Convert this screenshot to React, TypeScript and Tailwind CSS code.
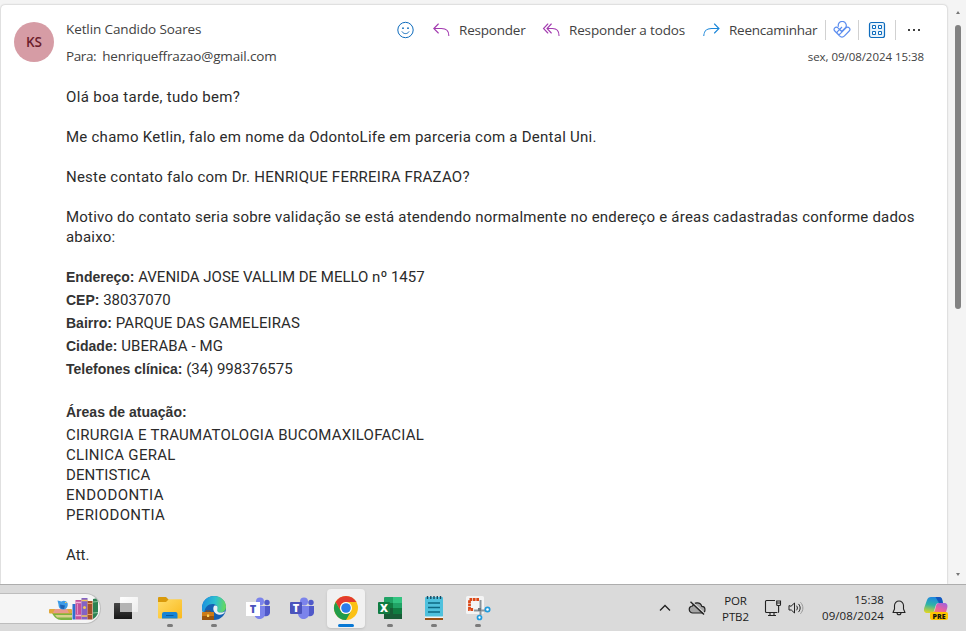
import React from "react";

const TEXT_UI = "font-['Open_Sans','Noto_Sans',sans-serif]";
const TEXT_BODY = "font-[Roboto,'Liberation_Sans',sans-serif]";

interface MailLine {
  label?: string;
  text?: string;
  className: string;
}

const mailLines: MailLine[] = [
  { text: "Olá boa tarde, tudo bem?", className: "h-10 tracking-[0.33px]" },
  {
    text: "Me chamo Ketlin, falo em nome da OdontoLife em parceria com a Dental Uni.",
    className: "h-10 tracking-[0.25px]",
  },
  {
    text: "Neste contato falo com Dr. HENRIQUE FERREIRA FRAZAO?",
    className: "h-10 tracking-[0.23px]",
  },
  {
    text: "Motivo do contato seria sobre validação se está atendendo normalmente no endereço e áreas cadastradas conforme dados",
    className: "h-5 tracking-[0.21px]",
  },
  { text: "abaixo:", className: "h-10 tracking-[0.2px]" },
  {
    label: "Endereço:",
    text: "AVENIDA JOSE VALLIM DE MELLO nº 1457",
    className: "h-[23px] tracking-[-0.01px]",
  },
  { label: "CEP:", text: "38037070", className: "h-[23px]" },
  {
    label: "Bairro:",
    text: "PARQUE DAS GAMELEIRAS",
    className: "h-[23px] tracking-[0.1px]",
  },
  {
    label: "Cidade:",
    text: "UBERABA - MG",
    className: "h-[23px] tracking-[0.1px]",
  },
  {
    label: "Telefones clínica:",
    text: "(34) 998376575",
    className: "h-[43px] tracking-[-0.03px]",
  },
  { label: "Áreas de atuação:", className: "h-[23px]" },
  {
    text: "CIRURGIA E TRAUMATOLOGIA BUCOMAXILOFACIAL",
    className: "h-5 tracking-[0.23px]",
  },
  { text: "CLINICA GERAL", className: "h-5 tracking-[0.3px]" },
  { text: "DENTISTICA", className: "h-5 tracking-[0.1px]" },
  { text: "ENDODONTIA", className: "h-5 tracking-[0.5px]" },
  { text: "PERIODONTIA", className: "h-10 tracking-[0.36px]" },
  { text: "Att.", className: "h-5" },
];

const SmileIcon = () => (
  <svg width="18" height="18" viewBox="0 0 18 18" fill="none" stroke="#0f6cbd">
    <circle cx="9.5" cy="9" r="7.7" />
    <path d="M6.1 10.8c1.5 2.500 5.300 2.500 6.800 0" strokeLinecap="round" />
    <circle cx="7" cy="7.200" r="0.9" fill="#0f6cbd" stroke="none" />
    <circle cx="12" cy="7.200" r="0.9" fill="#0f6cbd" stroke="none" />
  </svg>
);

const ReplyIcon = () => (
  <svg
    className="overflow-visible"
    width="18"
    height="14"
    viewBox="0 0 18 14"
    fill="none"
    stroke="#a33bb0"
    strokeWidth="1.1"
    strokeLinecap="round"
  >
    <path d="M6.300 1 1.800 5.500l4.500 4.500M2 5.500H9.500c4.500 0 7.300 2.700 7.300 7" />
  </svg>
);

const ReplyAllIcon = () => (
  <svg
    className="overflow-visible"
    width="18"
    height="14"
    viewBox="0 0 18 14"
    fill="none"
    stroke="#a33bb0"
    strokeWidth="1.1"
    strokeLinecap="round"
  >
    <path d="M5.800 1 1.500 5.500 5.800 10M9.300 1 5 5.500 9.300 10M5.200 5.500H10.500c4 0 6.500 2.700 6.500 7" />
  </svg>
);

const ForwardIcon = () => (
  <svg
    className="overflow-visible"
    width="18"
    height="14"
    viewBox="0 0 18 14"
    fill="none"
    stroke="#1a86d9"
    strokeWidth="1.1"
    strokeLinecap="round"
  >
    <path d="M12.500 1 17 5.500 12.500 10M16.800 5.500H9.500c-4.500 0-7.700 2.700-7.700 7" />
  </svg>
);

const VivaIcon = () => (
  <svg
    width="18"
    height="18"
    viewBox="0 0 18 18"
    fill="none"
    stroke="#5b8def"
    strokeWidth="1.200"
    strokeLinejoin="round"
  >
    <path d="M5.500 5.800A4 4 0 1 1 12.700 6.500L8.700 10.500 5 6.800a2.200 2.200 0 0 0-3.200 0 2.300 2.300 0 0 0 0 3.200l4.700 4.900c1.400 1.500 3.600 1.500 5 0l4.700-4.900a2.300 2.300 0 0 0 0-3.200 2.200 2.200 0 0 0-3.200 0l-5.900 6a1.700 1.700 0 0 1-2.600-2.200L9 6" />
  </svg>
);

const AppsIcon = () => (
  <svg width="18" height="18" viewBox="0 0 18 18" fill="none" stroke="#0f6cbd">
    <rect x="1.500" y="1.500" width="15" height="15" rx="2" fill="#eaf4fc" strokeWidth="1.200" />
    <path
      d="M4.500 4.500h3v3h-3zM10.500 4.500h3v3h-3zM4.500 10.500h3v3h-3zM10.500 10.500h3v3h-3z"
      fill="#fff"
    />
  </svg>
);

const BooksArt = () => (
  <svg width="50" height="25" viewBox="0 0 50 25">
    <path d="M3 17h20v7H12c-4 0-7-3-9-7z" fill="#7cb342" />
    <path d="M6 19h17v2.500H8z" fill="#d9d08c" />
    <rect x="0" y="13" width="23" height="4.500" rx="1" fill="#e0a83c" />
    <path d="M6 13h12l2 4H4z" fill="#e99a8c" />
    <path d="M8.500 4.500l4 1c1.500-1.500 5-1 6 1.500.8 2 0 6-3.500 6.500-4 0-5.500-2-5.500-5z" fill="#3d9be6" />
    <path d="M11 8.500l5 1-1 3.500-3.500-.5z" fill="#1d62b5" />
    <path d="M16 6.500l1.500 0" stroke="#f5d15c" />
    <rect x="23.500" y="8" width="3" height="15.500" fill="#2f6fd0" />
    <rect x="26.500" y="4" width="6" height="19.500" fill="#c2509c" />
    <path d="M26.500 6.500h6M26.500 19.500h6" stroke="#efb0d8" strokeWidth="1.500" />
    <path d="M28.500 8v10" stroke="#e58cc4" />
    <rect x="32.500" y="2" width="6" height="21.500" fill="#8362c4" />
    <path d="M32.500 4.500h6M32.500 20h6" stroke="#f2c75b" strokeWidth="1.500" />
    <circle cx="35.500" cy="11.500" r="1.500" fill="#f2c75b" />
    <rect x="38.500" y="5" width="5" height="18.500" fill="#a3502b" />
    <path d="M38.500 7.500h5M38.500 18.500h5" stroke="#e3a35c" />
    <path d="M44 3l5-1v15c-1 3-3 5-5 6z" fill="#2c8152" />
    <path d="M44 6l5-.5M44 17l5-.5" stroke="#8bc49b" />
  </svg>
);

const TaskViewIcon = () => (
  <svg width="26" height="26" viewBox="0 0 26 26">
    <defs>
      <linearGradient id="tv" x1="0" y1="0" x2="0" y2="1">
        <stop stopColor="#464646" />
        <stop offset="1" stopColor="#171717" />
      </linearGradient>
      <linearGradient id="tv2" x1="0" y1="0" x2="1" y2="1">
        <stop stopColor="#ffffff" />
        <stop offset="1" stopColor="#ececec" />
      </linearGradient>
    </defs>
    <rect x="1" y="8" width="18" height="16" rx="0.500" fill="url(#tv)" />
    <rect x="7" y="2" width="18" height="15" rx="0.500" fill="url(#tv2)" />
    <rect x="7" y="8" width="12" height="9" fill="#b4b4b4" />
  </svg>
);

const FolderIcon = () => (
  <svg width="26" height="26" viewBox="0 0 26 26">
    <defs>
      <linearGradient id="fd" x1="0" y1="0" x2="1" y2="1">
        <stop stopColor="#ffdd6a" />
        <stop offset="1" stopColor="#fab91c" />
      </linearGradient>
    </defs>
    <path d="M1 3a1 1 0 0 1 1-1h7l2.500 2.500V8H1z" fill="#d99a0b" />
    <path d="M1 7h8l2.800-2.800H24a1 1 0 0 1 1 1V22.500a1 1 0 0 1-1 1H2a1 1 0 0 1-1-1z" fill="url(#fd)" />
    <path d="M5 23.500V19a2 2 0 0 1 2-2h11.500a2 2 0 0 1 2 2v4.500z" fill="#1684d5" />
    <path d="M9 20.500h7.500" stroke="#085b9f" />
  </svg>
);

const EdgeIcon = () => (
  <svg width="26" height="26" viewBox="0 0 26 26">
    <defs>
      <linearGradient id="eg" x1="0" y1=".3" x2="1" y2=".4">
        <stop stopColor="#1c8fe0" />
        <stop offset=".55" stopColor="#2dc0cf" />
        <stop offset="1" stopColor="#66d95c" />
      </linearGradient>
    </defs>
    <circle cx="13" cy="13" r="12" fill="#1560b3" />
    <path
      d="M1 13C1 6 6 1 13 1c7 0 12 5 12 10.500 0 4-2.500 6-6 6-4 0-4-1.500-3-3 1.500-3-1-5.500-4.500-5.500C7 9 4 12 3 18 1.500 16 1 15 1 13z"
      fill="url(#eg)"
    />
    <path
      d="M13 11c2-1 4 0 3.500 2.500-.6 2-.5 4 3 4 2 0 3.500-.5 4.700-1.300C23 20 19 20 17 19.500c-3.500-1-6-5-4-8.500z"
      fill="#e8f1f5"
    />
    <rect x="1" y="17" width="12" height="8" rx="0.500" fill="#cd7c17" />
    <rect x="1" y="21" width="12" height="4" rx="0.500" fill="#99540d" />
    <path d="M5 17v-1h4v1" stroke="#8b4b0e" fill="none" />
    <rect x="6" y="19.500" width="2.200" height="2.500" fill="#ffd25c" />
  </svg>
);

const TeamsIcon = ({ light }: { light?: boolean }) => (
  <svg width="26" height="26" viewBox="0 0 26 26">
    <circle cx="22" cy="7.500" r="2.700" fill="#5059c9" />
    <path d="M18 11h7v6.500c0 3-3 4.500-6 3.500z" fill="#5059c9" />
    <circle cx="15" cy="6.500" r="4" fill="#7b83eb" />
    <path d="M9 11h11v7.500c0 4-3 5.500-5.500 5.500S9 22 9 18z" fill="#7b83eb" />
    <rect
      x="1"
      y="7"
      width={light ? 14 : 12}
      height={light ? 14 : 12}
      rx={light ? 0 : 1}
      fill={light ? "#fff" : "#4b53bc"}
    />
    <text
      x={light ? 8 : 7}
      y={light ? 18 : 17}
      textAnchor="middle"
      className="font-['Open_Sans'] text-[11px] font-extrabold"
      fill={light ? "#4b53bc" : "#fff"}
    >
      T
    </text>
  </svg>
);

const ChromeIcon = () => (
  <svg width="26" height="26" viewBox="0 0 26 26">
    <circle cx="13" cy="13" r="12" fill="#fbc116" />
    <path d="M2.600 7A12 12 0 0 1 23.400 7H13a6 6 0 0 0-5.200 9z" fill="#e33b2e" />
    <path d="M2.600 7A12 12 0 0 0 13 25l5.200-9A6 6 0 0 1 7.800 16z" fill="#229c4a" />
    <circle cx="13" cy="13" r="6" fill="#fff" />
    <circle cx="13" cy="13" r="4.800" fill="#2b7de9" />
  </svg>
);

const ExcelIcon = () => (
  <svg width="26" height="26" viewBox="0 0 26 26">
    <rect x="7" y="2" width="18" height="22" rx="1" fill="#21a366" />
    <path d="M16 2h8a1 1 0 0 1 1 1v5h-9z" fill="#33c481" />
    <path d="M7 8h9v5H7z" fill="#107c41" />
    <path d="M7 13h9v11H7z" fill="#185c37" />
    <path d="M16 13h9v6h-9z" fill="#107c41" />
    <path d="M16 19h9v5h-9z" fill="#185c37" />
    <rect x="1" y="7" width="12" height="12" rx="1" fill="#107c41" />
    <text
      x="7"
      y="17"
      textAnchor="middle"
      className="font-['Open_Sans'] text-[11px] font-extrabold"
      fill="#fff"
    >
      X
    </text>
  </svg>
);

const NotepadIcon = () => (
  <svg width="26" height="26" viewBox="0 0 26 26">
    <rect x="4" y="2" width="18" height="20" rx="1" fill="#4fc1dd" />
    <path
      d="M6.500 1v3M9.800 1v3M13 1v3M16.300 1v3M19.500 1v3"
      stroke="#164a63"
      strokeWidth="1.400"
    />
    <path d="M7 8h12M7 12.500h12M7 17h12" stroke="#0d6883" strokeWidth="1.600" />
    <path d="M4 21.500h18v1.500H4z" fill="#f4f4f4" />
    <path d="M4 23h18v2H4z" fill="#9a5013" />
  </svg>
);

const SnipIcon = () => (
  <svg width="26" height="26" viewBox="0 0 26 26">
    <rect x="1" y="1" width="18" height="18" rx="1.500" fill="#f4f4f4" />
    <path
      d="M14 4.500H4.500v10h4"
      fill="none"
      stroke="#dc4817"
      strokeWidth="2.800"
      strokeDasharray="2.700 0.700"
    />
    <path d="M15.500 5v15M9 15.500h12" stroke="#8b959c" strokeWidth="2" />
    <path d="M13 13h3v3h-3z" fill="#6d767c" />
    <circle cx="22.500" cy="14.500" r="2.200" fill="#fff" stroke="#209bdc" strokeWidth="1.700" />
    <circle cx="14.500" cy="22.500" r="2" fill="#fff" stroke="#209bdc" strokeWidth="1.700" />
  </svg>
);

const CloudOffIcon = () => (
  <svg width="18" height="16" viewBox="0 0 18 16" fill="none" stroke="#222" strokeWidth="1.200">
    <path d="M5 13h8.500a3.300 3.300 0 0 0 .3-6.600A4.900 4.900 0 0 0 4.500 6 3.500 3.500 0 0 0 5 13z" fill="#a5a5a5" />
    <path d="M3.700 1.200 17 13.700" stroke="#dadada" strokeWidth="1.200" />
    <path d="M2.500 1.800 16 14.600" strokeWidth="1.400" />
  </svg>
);

const NetworkIcon = () => (
  <svg width="18" height="18" viewBox="0 0 18 18" fill="none" stroke="#222" strokeWidth="1.100">
    <path d="M11 1.500H2.500a1 1 0 0 0-1 1v10a1 1 0 0 0 1 1h10.500M6 13.500v3M10 13.500v3M4 16.500h8" />
    <path d="M12.700 2h3.800v3.500a1 1 0 0 1-1 1h-1.800a1 1 0 0 1-1-1zM12.700 4h3.800M14.600 6.500v6.500q0 .5-1 .5" />
  </svg>
);

const VolumeIcon = () => (
  <svg width="16" height="14" viewBox="0 0 16 14" fill="none" stroke="#222" strokeLinecap="round">
    <path d="M1 5v4h2.300L6.500 12V2L3.300 5z" strokeLinejoin="round" />
    <path d="M8.700 5c1 1.200 1 2.800 0 4M10.700 3.200c2 2.200 2 5.400 0 7.600" />
    <path d="M12.700 1.500c3 3.200 3 7.800 0 11" stroke="#999" />
  </svg>
);

const BellIcon = () => (
  <svg width="14" height="16" viewBox="0 0 14 16" fill="none" stroke="#222" strokeWidth="1.100" strokeLinejoin="round">
    <path d="M7 1a4.500 4.500 0 0 0-4.500 4.500V9L1 12.500h12L11.500 9V5.500A4.500 4.500 0 0 0 7 1zM5 12.700a2 2 0 0 0 4 0" />
  </svg>
);

const CopilotIcon = () => (
  <svg width="26" height="26" viewBox="0 0 26 26">
    <defs>
      <linearGradient id="cp1" x1=".5" y1="0" x2=".3" y2="1">
        <stop stopColor="#1d86e2" />
        <stop offset=".5" stopColor="#2fb3a6" />
        <stop offset="1" stopColor="#e0d622" />
      </linearGradient>
      <linearGradient id="cp2" x1=".8" y1="0" x2=".3" y2="1">
        <stop stopColor="#a261dd" />
        <stop offset=".5" stopColor="#ec619b" />
        <stop offset="1" stopColor="#f79554" />
      </linearGradient>
    </defs>
    <path
      d="M8 2h8c2 0 2.800 1 3.300 3l.7 3h-4c-2 0-3 1-3.500 3L11 16c-.4 1-1 2-2.500 2H4.500c-3 0-4-2-3.300-5l2.800-8C4.700 3 6 2 8 2z"
      fill="url(#cp1)"
    />
    <path d="M12.500 2H16c2 0 2.800 1 3.300 3l.7 3h-4z" fill="#1556bd" />
    <path
      d="M16 8h5c3 0 4 2 3.200 5l-2.400 8H9l3-6 1-4c.4-2 1.300-3 3-3z"
      fill="url(#cp2)"
    />
    <rect x="7" y="17" width="18" height="8" rx="2" fill="#ffc400" />
    <text
      x="16"
      y="23.700"
      textAnchor="middle"
      className="font-['Open_Sans'] text-[7px] font-extrabold"
      fill="#111"
    >
      PRE
    </text>
  </svg>
);

interface TaskItem {
  name: string;
  icon: React.ReactNode;
  running?: boolean;
  active?: boolean;
}

const taskItems: TaskItem[] = [
  { name: "taskview", icon: <TaskViewIcon /> },
  { name: "explorer", icon: <FolderIcon />, running: true },
  { name: "edge", icon: <EdgeIcon />, running: true },
  { name: "teams-personal", icon: <TeamsIcon light /> },
  { name: "teams", icon: <TeamsIcon /> },
  { name: "chrome", icon: <ChromeIcon />, active: true },
  { name: "excel", icon: <ExcelIcon />, running: true },
  { name: "notepad", icon: <NotepadIcon />, running: true },
  { name: "snip", icon: <SnipIcon />, running: true },
];

const MailHeader = () => (
  <header className={`flex h-[82px] pt-[17px] pl-[13px] text-[#424242] ${TEXT_UI}`}>
    <div className="flex h-10 w-10 shrink-0 items-center justify-center rounded-full bg-[#d69ca5] text-[13.5px] font-semibold text-[#6b1d2c]">
      KS
    </div>
    <div className="ml-3 w-[330px] shrink-0 text-[13.5px]">
      <div className="-mt-[3px] h-[27px] leading-5 tracking-[-0.11px]">Ketlin Candido Soares</div>
      <div className="flex h-5 gap-[6px] leading-5">
        <span className="tracking-[-0.4px]">Para:</span>
        <span className="tracking-[-0.15px]">henriqueffrazao@gmail.com</span>
      </div>
    </div>
    <div className="w-[530px] shrink-0">
      <div className="-mt-[2px] flex h-5 items-center text-[13.5px] whitespace-nowrap">
        <button className="w-9 shrink-0">
          <SmileIcon />
        </button>
        <button className="flex w-[110px] shrink-0 items-center gap-[9px] tracking-[-0.2px]">
          <ReplyIcon />
          Responder
        </button>
        <button className="flex w-[160px] shrink-0 items-center gap-[9px] tracking-[-0.15px]">
          <ReplyAllIcon />
          Responder a todos
        </button>
        <button className="flex w-[123px] shrink-0 items-center gap-[9px] tracking-[-0.25px]">
          <ForwardIcon />
          Reencaminhar
        </button>
        <span className="h-5 w-px shrink-0 bg-[#d1d1d1]" />
        <button className="ml-[7px] shrink-0">
          <VivaIcon />
        </button>
        <span className="ml-[7px] h-5 w-px shrink-0 bg-[#d1d1d1]" />
        <button className="ml-[9px] shrink-0">
          <AppsIcon />
        </button>
        <span className="ml-[9px] h-5 w-px shrink-0 bg-[#d1d1d1]" />
        <button className="ml-[12px] flex shrink-0 gap-[3px]">
          <i className="size-[2px] bg-[#424242]" />
          <i className="size-[2px] bg-[#424242]" />
          <i className="size-[2px] bg-[#424242]" />
        </button>
      </div>
      <div className="mt-[9px] w-[528px] text-right text-[11.5px] leading-[16px] tracking-[-0.05px]">
        sex, 09/08/2024 15:38
      </div>
    </div>
  </header>
);

const Taskbar = () => (
  <footer className={`flex h-[47px] items-center border-t border-[#adadad] bg-[#dadada] text-[#1c1c1c] ${TEXT_UI}`}>
    <div className="flex h-[31px] w-[101px] shrink-0 items-center justify-end overflow-hidden rounded-r-full border border-l-0 border-[#bdbdbd] bg-[#f5f5f5] pr-px">
      <BooksArt />
    </div>
    <nav className="ml-[3px] flex">
      {taskItems.map((item) => (
        <button key={item.name} className="flex h-[46px] w-11 items-center justify-center">
          <span
            className={`flex h-[39px] w-[38px] flex-col items-center rounded pt-[6px] ${
              item.active ? "bg-[#f1f1f1] shadow-sm" : ""
            }`}
          >
            {item.icon}
            {item.running && <i className="mt-[3px] h-[3px] w-[6px] rounded-full bg-[#7b7b7b]" />}
            {item.active && <i className="mt-[3px] h-[3px] w-4 rounded-full bg-[#0878d5]" />}
          </span>
        </button>
      ))}
    </nav>
    <div className="ml-[159px] flex items-center text-[11.5px] leading-4">
      <svg width="12" height="8" viewBox="0 0 12 8" fill="none" stroke="#222" strokeWidth="1.300">
        <path d="M1 6.500 6 1.500l5 5" />
      </svg>
      <div className="ml-[17px]">
        <CloudOffIcon />
      </div>
      <div className="mt-px ml-[12px] w-[35px] text-center tracking-[-0.1px]">
        <div>POR</div>
        <div>PTB2</div>
      </div>
      <div className="ml-[11px]">
        <NetworkIcon />
      </div>
      <div className="ml-[6px]">
        <VolumeIcon />
      </div>
      <div className="ml-[10px] w-[70px] text-right tracking-[0.1px]">
        <div>15:38</div>
        <div>09/08/2024</div>
      </div>
      <div className="ml-2">
        <BellIcon />
      </div>
      <div className="ml-[17px]">
        <CopilotIcon />
      </div>
    </div>
  </footer>
);

const App: React.FC = () => {
  return (
    <div className="flex h-[631px] w-[966px] flex-col overflow-hidden bg-[#f4f4f4]">
      <main className="flex h-[584px] pt-[5px]">
        <article className="ml-px w-[946px] shrink-0 rounded-t bg-white shadow-[0_0_2px_rgba(0,0,0,0.3)]">
          <MailHeader />
          <div className={`pl-[65px] text-[15px] leading-5 text-[#2b2b2b] ${TEXT_BODY}`}>
            {mailLines.map((line) => (
              <p key={line.label ?? line.text} className={`whitespace-pre ${line.className}`}>
                {line.label && (
                  <b className="font-['Liberation_Sans'] text-[14px] tracking-normal text-[#333]">{line.label}</b>
                )}
                {line.label && line.text && " "}
                {line.text}
              </p>
            ))}
          </div>
        </article>
        <aside className="ml-[5px] flex w-[12px] flex-col items-center">
          <i className="mt-[6px] h-0 w-0 border-x-2 border-b-[3px] border-x-transparent border-b-[#777]" />
          <i className="mt-[11px] h-[284px] w-[6px] rounded-full bg-[#828282]" />
          <i className="mt-auto mb-2 h-0 w-0 border-x-2 border-t-[3px] border-x-transparent border-t-[#777]" />
        </aside>
      </main>
      <Taskbar />
    </div>
  );
};

export default App;
